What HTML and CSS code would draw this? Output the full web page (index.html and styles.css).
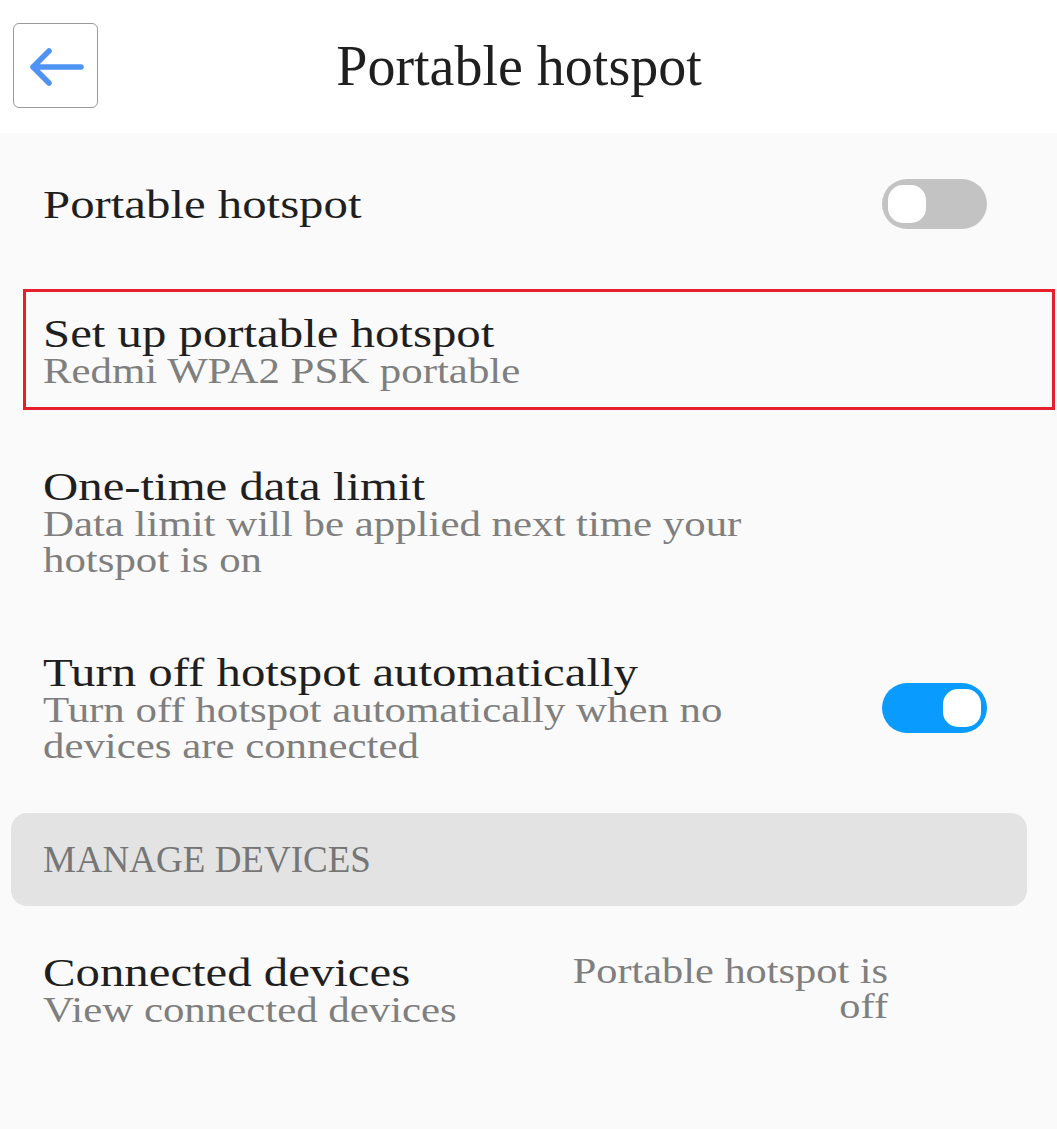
FILE: index.html
```html
<!DOCTYPE html>
<html>

<head>
  <title>Portable hotspot</title>
  <link rel="stylesheet" href="styles.css">
</head>

<body>

  <div class="top-bar">
    <button class="btn-back">
      <svg viewBox="0 0 85 85" width="85" height="85">
        <path d="M20 44 H68 M36 28 L20 44 L36 60" fill="none" stroke="#4f93f5" stroke-width="5.5" stroke-linecap="round" stroke-linejoin="round" />
      </svg>
    </button>
    <h1 class="page-title">Portable hotspot</h1>
  </div>

  <div class="list">

    <div class="row">
      <div class="row-text">
        <p class="row-title">Portable hotspot</p>
      </div>
      <div class="switch"><span class="knob"></span></div>
    </div>

    <div class="row row-picked">
      <div class="row-text">
        <p class="row-title">Set up portable hotspot</p>
        <p class="row-sub">Redmi WPA2 PSK portable</p>
      </div>
    </div>

    <div class="row">
      <div class="row-text">
        <p class="row-title">One-time data limit</p>
        <p class="row-sub">Data limit will be applied next time your hotspot is on</p>
      </div>
    </div>

    <div class="row">
      <div class="row-text">
        <p class="row-title">Turn off hotspot automatically</p>
        <p class="row-sub">Turn off hotspot automatically when no devices are connected</p>
      </div>
      <div class="switch switch-on"><span class="knob"></span></div>
    </div>

    <div class="section-head">MANAGE DEVICES</div>

    <div class="row row-top">
      <div class="row-text">
        <p class="row-title">Connected devices</p>
        <p class="row-sub">View connected devices</p>
      </div>
      <p class="row-value">Portable hotspot is off</p>
    </div>

  </div>

</body>

</html>
```

FILE: styles.css
```css
body {
  margin: 0;
  background-color: #fafafa;
  color: #1f1f1f;
  font-family: "Liberation Serif", serif;
}

p {
  margin: 0;
}

/* header */
.top-bar {
  display: flex;
  align-items: center;
  background-color: white;
  padding: 23px 117px 25px 13px;
}

.btn-back {
  width: 85px;
  height: 85px;
  padding: 0;
  border: 1.5px solid #9a9a9a;
  border-radius: 6px;
  background-color: white;
}

.btn-back svg {
  display: block;
  margin: -1.5px;
}

.page-title {
  flex: 1;
  margin: 0;
  text-align: center;
  font-size: 56px;
  font-weight: normal;
  line-height: 64px;
}

/* settings rows */
.list {
  padding-top: 9px;
  padding-bottom: 40px;
}

.row {
  display: flex;
  align-items: center;
  justify-content: space-between;
  padding: 37px 70px 37px 43px;
}

.row-top {
  align-items: flex-start;
}

.row-picked {
  margin: 23px 2px 19px 23px;
  padding: 21px 20px 18px 17px;
  border: 3px solid #e5202a;
}

.row-text {
  max-width: 640px;
  transform: scaleX(1.19);
  transform-origin: left;
}

.row-title {
  font-size: 41px;
  line-height: 40px;
  color: #1f1f1f;
}

.row-sub {
  font-size: 36px;
  line-height: 36px;
  color: #7f7f7f;
}

.row-value {
  width: 280px;
  margin: 2px 99px 0 0;
  font-size: 35px;
  line-height: 35px;
  color: #7f7f7f;
  text-align: right;
  transform: scaleX(1.21);
  transform-origin: right;
}

/* toggle switch */
.switch {
  flex-shrink: 0;
  display: flex;
  align-items: center;
  width: 105px;
  height: 50px;
  padding: 0 6px;
  box-sizing: border-box;
  border-radius: 25px;
  background-color: #c3c3c3;
}

.switch-on {
  justify-content: flex-end;
  background-color: #0a9bff;
}

.knob {
  width: 38px;
  height: 38px;
  border-radius: 15px;
  background-color: white;
}

/* group label */
.section-head {
  display: flex;
  align-items: center;
  height: 93px;
  margin: 12px 30px 9px 11px;
  padding-left: 32px;
  border-radius: 16px;
  background-color: #e3e3e3;
  color: #767676;
  font-size: 37px;
}
```
